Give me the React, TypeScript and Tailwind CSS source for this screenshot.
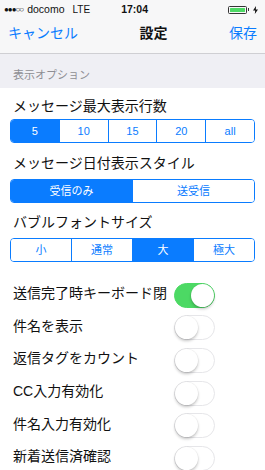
import { useState } from "react";

const FONT = '"Liberation Sans", "Noto Sans CJK JP", sans-serif';

function Segmented({
  items,
  selected,
  onSelect,
}: {
  items: string[];
  selected: number;
  onSelect: (i: number) => void;
}) {
  return (
    <div className="mx-[10px] flex h-[24px] overflow-hidden rounded-[4px] border border-[#0a7cff]">
      {items.map((item, i) => (
        <button
          key={item}
          onClick={() => onSelect(i)}
          className={`flex flex-1 items-center justify-center text-[11px] ${
            i > 0 ? "border-l border-[#0a7cff]" : ""
          } ${i === selected ? "bg-[#0a7cff] text-white" : "bg-white text-[#0a7cff]"}`}
        >
          {item}
        </button>
      ))}
    </div>
  );
}

function Toggle({ on, onChange }: { on: boolean; onChange: () => void }) {
  return (
    <button
      onClick={onChange}
      className={`relative h-[25px] w-[41px] shrink-0 rounded-full border ${
        on ? "border-[#4cd964] bg-[#4cd964]" : "border-[#e6e6e9] bg-white"
      }`}
    >
      <span
        className={`absolute top-0 h-[23px] w-[23px] rounded-full bg-white shadow-[0_2px_3px_rgba(0,0,0,0.22),0_0_0_0.5px_rgba(0,0,0,0.06)] ${
          on ? "right-0" : "left-0"
        }`}
      />
    </button>
  );
}

export default function App() {
  const [lines, setLines] = useState(0);
  const [dateStyle, setDateStyle] = useState(0);
  const [fontSize, setFontSize] = useState(2);
  const [toggles, setToggles] = useState([true, false, false, false, false, false]);

  const labels = [
    "送信完了時キーボード閉",
    "件名を表示",
    "返信タグをカウント",
    "CC入力有効化",
    "件名入力有効化",
    "新着送信済確認",
  ];

  return (
    <div
      className="h-[470px] w-[265px] overflow-hidden bg-white text-[#111]"
      style={{ fontFamily: FONT }}
    >
      {/* status bar + nav */}
      <div className="border-b border-[#cfcfd3] bg-[#f7f7f8]">
        <div className="flex h-[19px] items-center px-[4px] text-[10.5px]">
          <span className="tracking-[-1px] text-[8px]">●●●○○</span>
          <span className="ml-[4px]">docomo</span>
          <span className="ml-[8px] text-[10px]">LTE</span>
          <span className="ml-[31px] font-bold">17:04</span>
          <div className="ml-auto mr-[3px] flex items-center gap-[2px]">
            <div className="flex h-[8px] w-[19px] items-center rounded-[1.5px] border border-[#333] p-[1px]">
              <div className="h-full w-full rounded-[0.5px] bg-[#4cd964]" />
            </div>
            <div className="-ml-[1px] h-[3px] w-[1.5px] bg-[#333]" />
            <svg width="5" height="8" viewBox="0 0 5 8" className="ml-[2px]">
              <path d="M3 0 L0 4.6 H2.2 L1.8 8 L5 3.4 H2.8 Z" fill="#111" />
            </svg>
          </div>
        </div>
        <div className="flex h-[34px] items-center justify-between px-[8px] pb-[5px] text-[14px]">
          <button className="text-[#0a7cff]">キャンセル</button>
          <span className="font-bold">設定</span>
          <button className="text-[#0a7cff]">保存</button>
        </div>
      </div>

      {/* section header */}
      <div className="flex h-[34px] items-end bg-[#efeff4] px-[13px] pb-[6px] text-[11px] leading-[13px] text-[#8e8e93]">
        表示オプション
      </div>

      <div className="flex h-[31px] items-center px-[13px] pt-[6px] text-[14px]">
        メッセージ最大表示行数
      </div>
      <Segmented items={["5", "10", "15", "20", "all"]} selected={lines} onSelect={setLines} />

      <div className="flex h-[36px] items-center px-[13px] pt-[4px] text-[14px]">
        メッセージ日付表示スタイル
      </div>
      <Segmented items={["受信のみ", "送受信"]} selected={dateStyle} onSelect={setDateStyle} />

      <div className="flex h-[35px] items-center px-[13px] pt-[3px] text-[14px]">
        バブルフォントサイズ
      </div>
      <Segmented items={["小", "通常", "大", "極大"]} selected={fontSize} onSelect={setFontSize} />

      <div className="mt-[17px]">
        {labels.map((label, i) => (
          <div key={label} className="flex h-[32.6px] items-center px-[13px]">
            <span className="w-[161px] -mt-[3px] text-[14px]">{label}</span>
            <Toggle
              on={toggles[i]}
              onChange={() => setToggles((t) => t.map((v, j) => (j === i ? !v : v)))}
            />
          </div>
        ))}
      </div>
    </div>
  );
}
